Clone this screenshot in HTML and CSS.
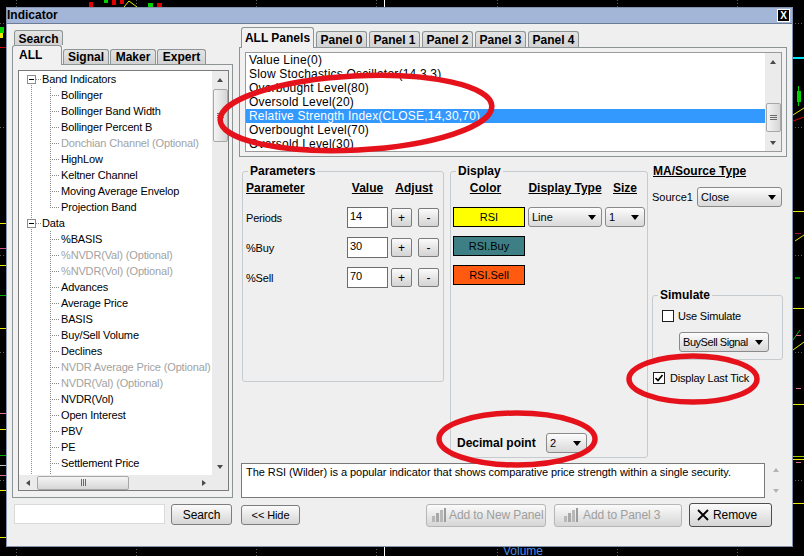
FILE: index.html
```html
<!DOCTYPE html>
<html lang="en">
<head>
<meta charset="utf-8">
<title>Indicator</title>
<link rel="stylesheet" href="styles.css">
</head>
<body>
<div class="screen">
  <svg class="chart" width="804" height="556" viewBox="0 0 804 556">
    <g stroke="#5e5e5e" stroke-width="1" stroke-dasharray="1 2">
      <line x1="16.5" y1="0" x2="16.5" y2="556"/>
      <line x1="136.5" y1="0" x2="136.5" y2="556"/>
      <line x1="256.5" y1="0" x2="256.5" y2="556"/>
      <line x1="376.5" y1="0" x2="376.5" y2="556"/>
      <line x1="497.5" y1="0" x2="497.5" y2="556"/>
      <line x1="617.5" y1="0" x2="617.5" y2="556"/>
      <line x1="737.5" y1="0" x2="737.5" y2="556"/>
      <line x1="0" y1="23.5" x2="804" y2="23.5"/>
      <line x1="0" y1="127.5" x2="804" y2="127.5"/>
      <line x1="0" y1="255.5" x2="804" y2="255.5"/>
      <line x1="0" y1="352.5" x2="804" y2="352.5"/>
      <line x1="0" y1="480.5" x2="804" y2="480.5"/>
    </g>
    <line x1="384.5" y1="0" x2="384.5" y2="556" stroke="#ffffff"/>
    <rect x="89" y="2" width="4" height="5" fill="#e00000"/>
    <rect x="104" y="0" width="4" height="3" fill="#00d000"/>
    <rect x="112" y="0" width="4" height="5" fill="#e00000"/>
    <rect x="120" y="0" width="4" height="4" fill="#e00000"/>
    <polyline points="124,7 129,1 133,4 137,7" fill="none" stroke="#e8e800" stroke-width="1"/>
    <rect x="148" y="3" width="5" height="4" fill="#00d000"/>
    <rect x="157" y="3" width="5" height="4" fill="#e00000"/>
    <rect x="0" y="27" width="4" height="6" fill="#00d000"/>
    <rect x="0" y="33" width="3" height="5" fill="#e8e800"/>
    <rect x="0" y="47" width="6" height="1" fill="#d00000"/>
    <rect x="0" y="223" width="6" height="1" fill="#e8e800"/>
    <rect x="0" y="248" width="6" height="1" fill="#d0508a"/>
    <rect x="0" y="265" width="6" height="1" fill="#e8e800"/>
    <rect x="0" y="295" width="6" height="1" fill="#00b000"/>
    <rect x="0" y="328" width="6" height="1" fill="#e8e800"/>
    <rect x="0" y="413" width="6" height="1" fill="#e07090"/>
    <rect x="0" y="429" width="6" height="1" fill="#e8e800"/>
    <rect x="0" y="455" width="6" height="1" fill="#00b000"/>
    <rect x="0" y="465" width="6" height="1" fill="#c0c0c0"/>
    <rect x="0" y="475" width="6" height="1" fill="#e07090"/>
    <rect x="0" y="490" width="6" height="1" fill="#e8e800"/>
    <rect x="0" y="537" width="6" height="1" fill="#e8e800"/>
    <rect x="793" y="57" width="11" height="2" fill="#00e5ff"/>
    <line x1="798.5" y1="86" x2="798.5" y2="106" stroke="#00d000"/>
    <rect x="797" y="91" width="4" height="11" fill="#00d000"/>
    <line x1="793" y1="115" x2="804" y2="108" stroke="#e8e800"/>
    <line x1="793" y1="121" x2="804" y2="117" stroke="#e00000"/>
    <rect x="793" y="211" width="11" height="1" fill="#e8e800"/>
    <rect x="795" y="233" width="6" height="1" fill="#a0103a"/>
    <line x1="795" y1="241" x2="804" y2="235" stroke="#e8e800"/>
    <rect x="795" y="277" width="5" height="2" fill="#008a00"/>
    <rect x="793" y="308" width="11" height="1" fill="#e8e800"/>
    <line x1="793" y1="340" x2="800" y2="330" stroke="#00c000"/>
    <line x1="793" y1="350" x2="804" y2="342" stroke="#e8e800"/>
    <rect x="796" y="335" width="5" height="1" fill="#e07090"/>
    <rect x="796" y="388" width="5" height="1" fill="#e07090"/>
    <rect x="793" y="404" width="11" height="1" fill="#e8e800"/>
    <rect x="793" y="456" width="11" height="1" fill="#9ad000"/>
    <rect x="793" y="459" width="11" height="1" fill="#e8e800"/>
    <rect x="796" y="462" width="5" height="1" fill="#e07090"/>
    <rect x="793" y="503" width="11" height="1" fill="#e8e800"/>
    <text x="503" y="555" class="vol">Volume</text>
  </svg>

  <div class="dialog">
    <div class="titlebar">
      <span class="title">Indicator</span>
      <span class="close">X</span>
    </div>
    <div class="dbody">
      <div class="left">
        <div class="tabrow1"><div class="tab tab-search">Search</div></div>
        <div class="tabrow2">
          <div class="tab sel tab-all">ALL</div>
          <div class="tab tab-signal">Signal</div>
          <div class="tab tab-maker">Maker</div>
          <div class="tab tab-expert">Expert</div>
        </div>
        <div class="lpanel">
          <div class="tree">
            <div class="tree-content">
              <div class="trow"><span class="g-root first"><span class="pm"></span></span><span class="tt">Band Indicators</span></div>
              <div class="trow"><span class="g-child"></span><span class="tt">Bollinger</span></div>
              <div class="trow"><span class="g-child"></span><span class="tt">Bollinger Band Width</span></div>
              <div class="trow"><span class="g-child"></span><span class="tt">Bollinger Percent B</span></div>
              <div class="trow"><span class="g-child"></span><span class="tt opt">Donchian Channel (Optional)</span></div>
              <div class="trow"><span class="g-child"></span><span class="tt">HighLow</span></div>
              <div class="trow"><span class="g-child"></span><span class="tt">Keltner Channel</span></div>
              <div class="trow"><span class="g-child"></span><span class="tt">Moving Average Envelop</span></div>
              <div class="trow"><span class="g-child last"></span><span class="tt">Projection Band</span></div>
              <div class="trow"><span class="g-root"><span class="pm"></span></span><span class="tt">Data</span></div>
              <div class="trow"><span class="g-child"></span><span class="tt">%BASIS</span></div>
              <div class="trow"><span class="g-child"></span><span class="tt opt">%NVDR(Val) (Optional)</span></div>
              <div class="trow"><span class="g-child"></span><span class="tt opt">%NVDR(Vol) (Optional)</span></div>
              <div class="trow"><span class="g-child"></span><span class="tt">Advances</span></div>
              <div class="trow"><span class="g-child"></span><span class="tt">Average Price</span></div>
              <div class="trow"><span class="g-child"></span><span class="tt">BASIS</span></div>
              <div class="trow"><span class="g-child"></span><span class="tt">Buy/Sell Volume</span></div>
              <div class="trow"><span class="g-child"></span><span class="tt">Declines</span></div>
              <div class="trow"><span class="g-child"></span><span class="tt opt">NVDR Average Price (Optional)</span></div>
              <div class="trow"><span class="g-child"></span><span class="tt opt">NVDR(Val) (Optional)</span></div>
              <div class="trow"><span class="g-child"></span><span class="tt">NVDR(Vol)</span></div>
              <div class="trow"><span class="g-child"></span><span class="tt">Open Interest</span></div>
              <div class="trow"><span class="g-child"></span><span class="tt">PBV</span></div>
              <div class="trow"><span class="g-child"></span><span class="tt">PE</span></div>
              <div class="trow"><span class="g-child"></span><span class="tt">Settlement Price</span></div>
              <div class="trow"><span class="g-child"></span></div>
            </div>
            <div class="vscroll">
              <div class="sbtn"><span class="tri-up"></span></div>
              <div class="vthumb tree-thumb"><span class="grip-h"></span></div>
              <div class="sfill"></div>
              <div class="sbtn"><span class="tri-down"></span></div>
            </div>
            <div class="hscroll">
              <div class="hbtn"><span class="tri-left"></span></div>
              <div class="hthumb"><span class="grip-v"></span></div>
              <div class="sfill"></div>
              <div class="hbtn"><span class="tri-right"></span></div>
            </div>
            <div class="corner"></div>
          </div>
        </div>
        <div class="searchrow">
          <div class="sinput"></div>
          <div class="btn search-btn">Search</div>
        </div>
      </div>

      <div class="right">
        <div class="rtabs">
          <div class="tab sel tab-allp">ALL Panels</div>
          <div class="tab tab-p">Panel 0</div>
          <div class="tab tab-p">Panel 1</div>
          <div class="tab tab-p">Panel 2</div>
          <div class="tab tab-p">Panel 3</div>
          <div class="tab tab-p">Panel 4</div>
        </div>
        <div class="rpanel">
          <div class="list">
            <div class="items">
              <div class="item">Value Line(0)</div>
              <div class="item">Slow Stochastics Oscillator(14,3,3)</div>
              <div class="item">Overbought Level(80)</div>
              <div class="item">Oversold Level(20)</div>
              <div class="item sel">Relative Strength Index(CLOSE,14,30,70)</div>
              <div class="item">Overbought Level(70)</div>
              <div class="item">Oversold Level(30)</div>
            </div>
            <div class="vscroll">
              <div class="sbtn"><span class="tri-up"></span></div>
              <div class="vthumb list-thumb"><span class="grip-h"></span></div>
              <div class="sfill"></div>
              <div class="sbtn"><span class="tri-down"></span></div>
            </div>
          </div>
        </div>

        <div class="middle">
          <fieldset class="group params">
            <legend>Parameters</legend>
            <div class="pgrid">
              <div class="hdr">Parameter</div>
              <div class="hdr c">Value</div>
              <div class="hdr c">Adjust</div>

              <div class="plabel">Periods</div>
              <div class="input">14</div>
              <div class="adj"><span class="sbt">+</span><span class="sbt">-</span></div>

              <div class="plabel">%Buy</div>
              <div class="input">30</div>
              <div class="adj"><span class="sbt">+</span><span class="sbt">-</span></div>

              <div class="plabel">%Sell</div>
              <div class="input">70</div>
              <div class="adj"><span class="sbt">+</span><span class="sbt">-</span></div>
            </div>
          </fieldset>

          <fieldset class="group display">
            <legend>Display</legend>
            <div class="dwrap">
              <div class="dgrid">
                <div class="hdr c hdr-color">Color</div>
                <div class="hdr c">Display Type</div>
                <div class="hdr c">Size</div>

                <div class="swatch sw-yellow">RSI</div>
                <div class="combo"><span>Line</span><span class="tri-dd"></span></div>
                <div class="combo"><span>1</span><span class="tri-dd"></span></div>

                <div class="swatch sw-teal">RSI.Buy</div>
                <div></div>
                <div></div>

                <div class="swatch sw-orange">RSI.Sell</div>
                <div></div>
                <div></div>
              </div>
              <div class="decrow">
                <span class="declabel">Decimal point</span>
                <div class="combo dec"><span>2</span><span class="tri-dd"></span></div>
              </div>
            </div>
          </fieldset>

          <div class="side">
            <div class="side-title">MA/Source Type</div>
            <div class="srow">
              <span class="slabel">Source1</span>
              <div class="combo src"><span>Close</span><span class="tri-dd"></span></div>
            </div>
            <fieldset class="group sim">
              <legend>Simulate</legend>
              <div class="simwrap">
                <div class="chkrow sim-chk"><span class="chk"></span><span>Use Simulate</span></div>
                <div class="combo bs"><span class="bs-text">BuySell Signal</span><span class="tri-dd"></span></div>
              </div>
            </fieldset>
            <div class="chkrow last-tick">
              <span class="chk"><svg width="10" height="10" viewBox="0 0 10 10"><polyline points="1.5,5 4,7.5 8.5,2" fill="none" stroke="#000" stroke-width="1.7"/></svg></span>
              <span>Display Last Tick</span>
            </div>
          </div>
        </div>

        <div class="descrow">
          <div class="desc">The RSI (Wilder) is a popular indicator that shows comparative price strength within a single security.</div>
          <div class="dscroll"><span class="tri-up light"></span><span class="tri-down light"></span></div>
        </div>

        <div class="btnrow">
          <div class="btn hide">&lt;&lt; Hide</div>
          <div class="btn disabled addnew">
            <svg width="16" height="16" viewBox="0 0 16 16"><rect x="1" y="9" width="3" height="6" fill="#b8b8b8"/><rect x="5" y="6" width="3" height="9" fill="#a8a8a8"/><rect x="9" y="3" width="3" height="12" fill="#b8b8b8"/><rect x="13" y="1" width="2" height="14" fill="#9c9c9c"/></svg>
            <span>Add to New Panel</span>
          </div>
          <div class="btn disabled add3">
            <svg width="16" height="16" viewBox="0 0 16 16"><rect x="1" y="9" width="3" height="6" fill="#b8b8b8"/><rect x="5" y="6" width="3" height="9" fill="#a8a8a8"/><rect x="9" y="3" width="3" height="12" fill="#b8b8b8"/><rect x="13" y="1" width="2" height="14" fill="#9c9c9c"/></svg>
            <span>Add to Panel 3</span>
          </div>
          <div class="btn remove">
            <svg width="12" height="12" viewBox="0 0 12 12"><path d="M1 1 L11 11 M11 1 L1 11" stroke="#000" stroke-width="1.8" fill="none"/></svg>
            <span>Remove</span>
          </div>
        </div>
      </div>
    </div>
  </div>

  <svg class="marks" width="804" height="556" viewBox="0 0 804 556">
    <g fill="none" stroke="#e5121c" stroke-width="5.5">
      <ellipse cx="356" cy="113" rx="136" ry="37" transform="rotate(-3 356 113)"/>
      <ellipse cx="693" cy="379" rx="64" ry="23"/>
      <ellipse cx="517" cy="439" rx="78" ry="26"/>
    </g>
  </svg>
</div>
</body>
</html>
```

FILE: styles.css
```css
* { box-sizing: border-box; }
html, body { margin: 0; padding: 0; }
body {
  width: 804px;
  height: 556px;
  overflow: hidden;
  background: #000;
  font-family: "Liberation Sans", Arial, sans-serif;
  font-size: 11px;
  color: #000;
}
.screen { position: relative; width: 804px; height: 556px; overflow: hidden; }
.chart { position: absolute; left: 0; top: 0; }
.vol { fill: #4a8ae6; font-family: "Liberation Sans", Arial, sans-serif; font-size: 12px; }
.marks { position: absolute; left: 0; top: 0; pointer-events: none; }

/* dialog */
.dialog {
  position: absolute;
  left: 6px;
  top: 7px;
  width: 787px;
  height: 540px;
  border: 1px solid #8494ae;
  background: #efefef;
  display: flex;
  flex-direction: column;
}
.titlebar {
  height: 16px;
  flex: none;
  background: #a3b6d8;
  border-bottom: 1px solid #6c7c97;
  display: flex;
  align-items: center;
  justify-content: space-between;
  padding: 0 2px 0 0;
}
.title { font-weight: bold; font-size: 12px; line-height: 15px; }
.close {
  width: 13px;
  height: 13px;
  background: #000;
  border: 1px solid #fff;
  color: #fff;
  font-size: 10px;
  font-weight: bold;
  display: flex;
  align-items: center;
  justify-content: center;
  line-height: 1;
}
.dbody { flex: 1; display: flex; padding-left: 5px; }

/* tabs */
.tab {
  border: 1px solid #8c9496;
  border-bottom: none;
  border-radius: 3px 3px 0 0;
  background: linear-gradient(#e4e4e4, #d2d2d2);
  font-weight: bold;
  font-size: 12px;
  line-height: 14px;
  display: flex;
  align-items: center;
  justify-content: center;
  white-space: nowrap;
}
.tab.sel { background: #f1f1f1; position: relative; z-index: 1; }

.left { width: 221px; flex: none; padding-top: 6px; }
.tabrow1 { height: 15px; display: flex; }
.tab-search { width: 49px; height: 15px; margin-left: 2px; padding-top: 2px; }
.tabrow2 { height: 19px; display: flex; align-items: flex-end; }
.tabrow2 .tab { height: 15px; margin-left: 1px; }
.tabrow2 .tab.tab-all {
  width: 50px;
  height: 20px;
  margin-left: 0;
  margin-bottom: -1px;
  justify-content: flex-start;
  align-items: flex-start;
  padding: 2px 0 0 6px;
}
.tab-signal, .tab-maker { width: 46px; }
.tab-expert { width: 49px; }

.lpanel {
  width: 221px;
  height: 434px;
  border: 1px solid #8c9496;
  background: #f1f1f1;
  padding: 5px 3px 6px 5px;
}

/* tree */
.tree {
  width: 211px;
  height: 421px;
  border: 1px solid #7b7b7b;
  background: #fff;
  display: grid;
  grid-template-columns: 193px 16px;
  grid-template-rows: 404px 15px;
}
.tree-content { overflow: hidden; letter-spacing: -0.15px; }
.trow { height: 16px; display: flex; white-space: nowrap; }
.tt { line-height: 16px; }
.opt { color: #a2a2a2; }
.g-root {
  width: 23px;
  height: 16px;
  flex: none;
  padding: 4px 0 0 8px;
  background-image:
    repeating-linear-gradient(#8a8a8a 0 1px, transparent 1px 2px),
    repeating-linear-gradient(to right, #8a8a8a 0 1px, transparent 1px 2px);
  background-size: 1px 16px, 6px 1px;
  background-position: 12px 0, 17px 8px;
  background-repeat: no-repeat;
}
.g-root.first { background-size: 1px 4px, 6px 1px; background-position: 12px 12px, 17px 8px; }
.pm {
  display: block;
  width: 9px;
  height: 9px;
  border: 1px solid #8c8c8c;
  background: linear-gradient(#000, #000) center / 5px 1px no-repeat, #fff;
}
.g-child {
  width: 42px;
  height: 16px;
  flex: none;
  background-image:
    repeating-linear-gradient(#8a8a8a 0 1px, transparent 1px 2px),
    repeating-linear-gradient(#8a8a8a 0 1px, transparent 1px 2px),
    repeating-linear-gradient(to right, #8a8a8a 0 1px, transparent 1px 2px);
  background-size: 1px 16px, 1px 16px, 8px 1px;
  background-position: 12px 0, 31px 0, 33px 8px;
  background-repeat: no-repeat;
}
.g-child.last { background-size: 1px 16px, 1px 9px, 8px 1px; }

/* scrollbars */
.vscroll {
  background: #ebebeb;
  display: flex;
  flex-direction: column;
  align-items: center;
}
.sbtn { height: 17px; width: 100%; flex: none; display: flex; align-items: center; justify-content: center; }
.sfill { flex: 1; }
.vthumb {
  width: 15px;
  flex: none;
  border: 1px solid #a7a7a7;
  border-radius: 2px;
  background: linear-gradient(to right, #f4f4f4, #d6d6d6);
  display: flex;
  align-items: center;
  justify-content: center;
}
.tree-thumb { height: 53px; margin-top: 1px; }
.list-thumb { height: 29px; margin-top: 33px; }
.grip-h { width: 7px; height: 5px; background: repeating-linear-gradient(#6a6a6a 0 1px, transparent 1px 2px); }
.hscroll { background: #ebebeb; display: flex; align-items: center; }
.hbtn { width: 17px; height: 15px; flex: none; display: flex; align-items: center; justify-content: center; }
.hthumb {
  width: 92px;
  height: 14px;
  margin-left: 1px;
  flex: none;
  border: 1px solid #a7a7a7;
  border-radius: 2px;
  background: linear-gradient(#f4f4f4, #d6d6d6);
  display: flex;
  align-items: center;
  justify-content: center;
}
.grip-v { width: 5px; height: 7px; background: repeating-linear-gradient(to right, #6a6a6a 0 1px, transparent 1px 2px); }
.corner { background: #ebebeb; }

.tri-up, .tri-down, .tri-left, .tri-right, .tri-dd { display: block; width: 0; height: 0; }
.tri-up { border-left: 3px solid transparent; border-right: 3px solid transparent; border-bottom: 4px solid #4a4a4a; }
.tri-down { border-left: 3px solid transparent; border-right: 3px solid transparent; border-top: 4px solid #4a4a4a; }
.tri-left { border-top: 3px solid transparent; border-bottom: 3px solid transparent; border-right: 4px solid #4a4a4a; }
.tri-right { border-top: 3px solid transparent; border-bottom: 3px solid transparent; border-left: 4px solid #4a4a4a; }
.tri-up.light { border-bottom-color: #b4b4b4; }
.tri-down.light { border-top-color: #b4b4b4; }
.tri-dd { flex: none; border-left: 4px solid transparent; border-right: 4px solid transparent; border-top: 5px solid #000; margin-left: auto; margin-right: 5px; }

/* search row */
.searchrow { display: flex; align-items: flex-start; margin-top: 6px; }
.sinput { margin-left: 2px; width: 151px; height: 20px; background: #fff; border: 1px solid #dadada; }

/* buttons */
.btn {
  display: flex;
  align-items: center;
  justify-content: center;
  border: 1px solid #7d7d7d;
  border-radius: 3px;
  background: linear-gradient(#fbfbfb, #e6e6e6 55%, #d6d6d6);
  font-size: 11px;
  letter-spacing: -0.1px;
  white-space: nowrap;
}
.search-btn { margin-left: 6px; width: 61px; height: 21px; font-size: 12px; }

/* right column */
.right { width: 548px; flex: none; margin-left: 6px; padding-top: 3px; display: flex; flex-direction: column; }
.rtabs { height: 20px; display: flex; align-items: flex-end; }
.rtabs .tab { height: 16px; }
.rtabs .tab.tab-allp { width: 73px; height: 21px; margin-left: 2px; margin-bottom: -1px; }
.tab-p { width: 51px; margin-left: 2px; padding-top: 1px; }
.rpanel {
  width: 548px;
  height: 110px;
  flex: none;
  border: 1px solid #8c9496;
  background: #f1f1f1;
  padding: 4px 4px 4px 5px;
}
.list {
  width: 537px;
  height: 100px;
  border: 1px solid #9a9a9a;
  background: #fff;
  display: grid;
  grid-template-columns: 1fr 16px;
}
.items { overflow: hidden; font-size: 12px; letter-spacing: 0.2px; }
.item { height: 14px; line-height: 14px; padding-left: 3px; white-space: nowrap; }
.item.sel { background: #3399ff; color: #fff; }

/* middle groups */
.middle { display: flex; align-items: flex-start; margin-top: 7px; height: 294px; flex: none; }
.group {
  padding: 0;
  min-width: 0;
  border: 1px solid #c6cbd0;
  border-radius: 3px;
}
.group legend {
  font-weight: bold;
  font-size: 12px;
  line-height: 14px;
  padding: 0 2px;
  margin-left: 5px;
}
.group.params { width: 202px; margin: 0 0 0 3px; }
.pgrid {
  height: 203px;
  display: grid;
  grid-template-columns: 101px 41px 52px;
  grid-template-rows: 20px 21px 21px 21px;
  row-gap: 9px;
  align-content: start;
  align-items: center;
  padding-left: 3px;
}
.hdr { font-weight: bold; font-size: 12px; text-decoration: underline; white-space: nowrap; }
.c { text-align: center; }
.plabel { letter-spacing: -0.2px; }
.input { height: 21px; background: #fff; border: 1px solid #6c6c6c; padding: 2px 0 0 2px; }
.adj { display: flex; padding-left: 3px; gap: 6px; }
.sbt {
  width: 21px;
  height: 19px;
  border: 1px solid #7b7b7b;
  border-radius: 2px;
  background: linear-gradient(#fbfbfb, #e2e2e2 60%, #d4d4d4);
  display: flex;
  align-items: center;
  justify-content: center;
  font-size: 12px;
}

.group.display { width: 198px; margin: 0 0 0 6px; }
.dwrap { height: 279px; display: flex; flex-direction: column; }
.dgrid {
  display: grid;
  grid-template-columns: 72px 74px 40px;
  column-gap: 3px;
  grid-template-rows: 20px 20px 20px 20px;
  row-gap: 9px;
  align-items: center;
  padding-left: 2px;
}
.hdr-color { padding-right: 7px; }
.swatch {
  height: 20px;
  border: 1px solid #000;
  display: flex;
  align-items: center;
  justify-content: center;
  font-size: 11px;
}
.sw-yellow { background: #ffff00; }
.sw-teal { background: #3e7f85; }
.sw-orange { background: #ff5a10; }
.combo {
  height: 20px;
  display: flex;
  align-items: center;
  border: 1px solid #8a8a8a;
  border-radius: 3px;
  background: linear-gradient(#fdfdfd, #e6e6e6 60%, #dadada);
  padding-left: 3px;
  white-space: nowrap;
}
.decrow { margin-top: auto; padding: 0 0 4px 6px; display: flex; align-items: center; }
.declabel { font-weight: bold; font-size: 12px; width: 77px; white-space: nowrap; }
.combo.dec { width: 41px; margin-left: 12px; }

.side { width: 135px; margin-left: 4px; }
.side-title { font-weight: bold; font-size: 12px; line-height: 14px; text-decoration: underline; padding-left: 1px; }
.srow { display: flex; align-items: center; margin-top: 9px; }
.slabel { width: 45px; }
.combo.src { width: 85px; }
.group.sim { width: 131px; margin: 81px 0 0 0; }
.simwrap { height: 57px; padding-top: 7px; }
.chkrow { display: flex; align-items: center; white-space: nowrap; letter-spacing: -0.2px; }
.chk {
  width: 12px;
  height: 12px;
  flex: none;
  border: 1px solid #1e1e1e;
  background: #fff;
  display: flex;
  align-items: center;
  justify-content: center;
}
.sim-chk { height: 13px; padding-left: 9px; gap: 4px; }
.combo.bs { width: 90px; margin: 10px 0 0 26px; }
.bs-text { letter-spacing: -0.45px; }
.last-tick { margin-top: 12px; padding-left: 1px; gap: 5px; }

/* description */
.descrow { display: flex; margin-top: 5px; height: 35px; flex: none; }
.desc {
  margin-left: 2px;
  width: 524px;
  height: 35px;
  border: 1px solid #7a7a7a;
  background: #fff;
  padding: 2px 4px;
  line-height: 13px;
  letter-spacing: -0.05px;
}
.dscroll {
  width: 22px;
  display: flex;
  flex-direction: column;
  align-items: center;
  justify-content: space-between;
  padding: 5px 0 5px 0;
}

/* bottom buttons */
.btnrow { display: flex; align-items: center; margin-top: 5px; height: 24px; flex: none; }
.hide { margin-left: 2px; width: 59px; height: 20px; }
.addnew { margin-left: 126px; width: 120px; height: 23px; justify-content: flex-start; padding-left: 4px; gap: 2px; }
.add3 { margin-left: 8px; width: 128px; height: 23px; justify-content: flex-start; padding-left: 8px; gap: 4px; }
.remove { margin-left: 7px; width: 83px; height: 24px; border-color: #4e4e4e; justify-content: flex-start; padding-left: 7px; gap: 4px; font-size: 12px; }
.disabled { color: #9e9e9e; border-color: #b6b6b6; font-size: 12px; }
```
